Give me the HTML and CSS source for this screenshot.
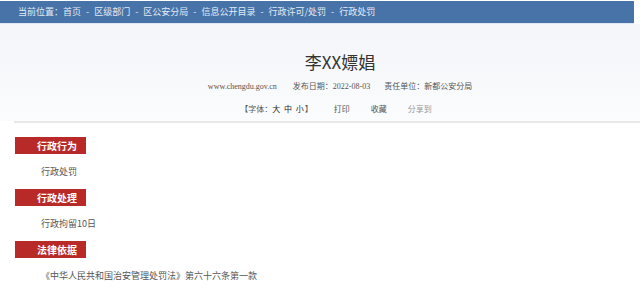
FILE: index.html
```html
<!DOCTYPE html>
<html lang="zh-CN">
<head>
  <meta charset="UTF-8" />
  <meta name="viewport" content="width=device-width, initial-scale=1.0" />
  <title>李XX嫖娼</title>
  <link rel="stylesheet" href="styles.css">
</head>
<body>
  <div class="crumb">
    当前位置：<span>首页</span><span class="sep">-</span><span>区级部门</span><span class="sep">-</span><span>区公安分局</span><span class="sep">-</span><span>信息公开目录</span><span class="sep">-</span><span>行政许可/处罚</span><span class="sep">-</span><span>行政处罚</span>
  </div>

  <div class="head">
    <h1 class="title">李XX嫖娼</h1>
    <div class="meta">
      <span class="site">www.chengdu.gov.cn</span>
      <span class="date">发布日期：2022-08-03</span>
      <span>责任单位：新都公安分局</span>
    </div>
    <div class="tools">
      <span>【字体：<b>大 中 小</b>】</span>
      <span>打印</span>
      <span>收藏</span>
      <span class="share">分享到</span>
    </div>
  </div>

  <div class="content">
    <h2 class="tag">行政行为</h2>
    <p>行政处罚</p>
    <h2 class="tag">行政处理</h2>
    <p>行政拘留10日</p>
    <h2 class="tag">法律依据</h2>
    <p>《中华人民共和国治安管理处罚法》第六十六条第一款</p>
  </div>
</body>
</html>
```

FILE: styles.css
```css
body {
  font-family: 'Noto Sans CJK SC', sans-serif;
  background-color: #ffffff;
  margin: 0;
  padding: 0;
}
.crumb {
  background-color: #4773a9;
  color: #e4ebf4;
  font-size: 9px;
  height: 22px;
  line-height: 22px;
  margin: 1px 6px 0 0;
  padding-left: 18px;
  border-bottom: 1px solid #dde7f2;
}
.crumb .sep {
  margin: 0 5px;
}
.head {
  background: linear-gradient(#f3f5f9, #fbfcfd);
  padding: 27px 0 6px 40px;
  text-align: center;
}
.title {
  margin: 0;
  font-size: 17px;
  font-weight: normal;
  line-height: 22px;
  color: #333;
}
.meta {
  margin-top: 8px;
  font-family: 'Liberation Serif', 'Noto Sans CJK SC', serif;
  font-size: 8px;
  line-height: 12px;
  color: #555;
}
.meta .site {
  margin-right: 14px;
}
.meta .date {
  margin-right: 12px;
}
.tools {
  margin-top: 10px;
  display: flex;
  justify-content: center;
  gap: 21px;
  font-size: 8px;
  line-height: 12px;
  color: #555;
  padding-right: 8px;
}
.tools b {
  font-weight: normal;
  color: #222;
  letter-spacing: 1px;
}
.tools .share {
  color: #999;
}
.content {
  margin-left: 14px;
  border-top: 2px solid #e8e8e8;
  padding: 14px 0 0 1px;
}
.tag {
  margin: 0;
  width: 49px;
  height: 17px;
  line-height: 17px;
  padding-left: 22px;
  font-size: 10px;
  font-weight: bold;
  color: #fff;
  background-color: #b82a27;
}
.content p {
  margin: 11px 0 11px 26px;
  font-size: 9px;
  line-height: 13px;
  color: #555;
}
```
